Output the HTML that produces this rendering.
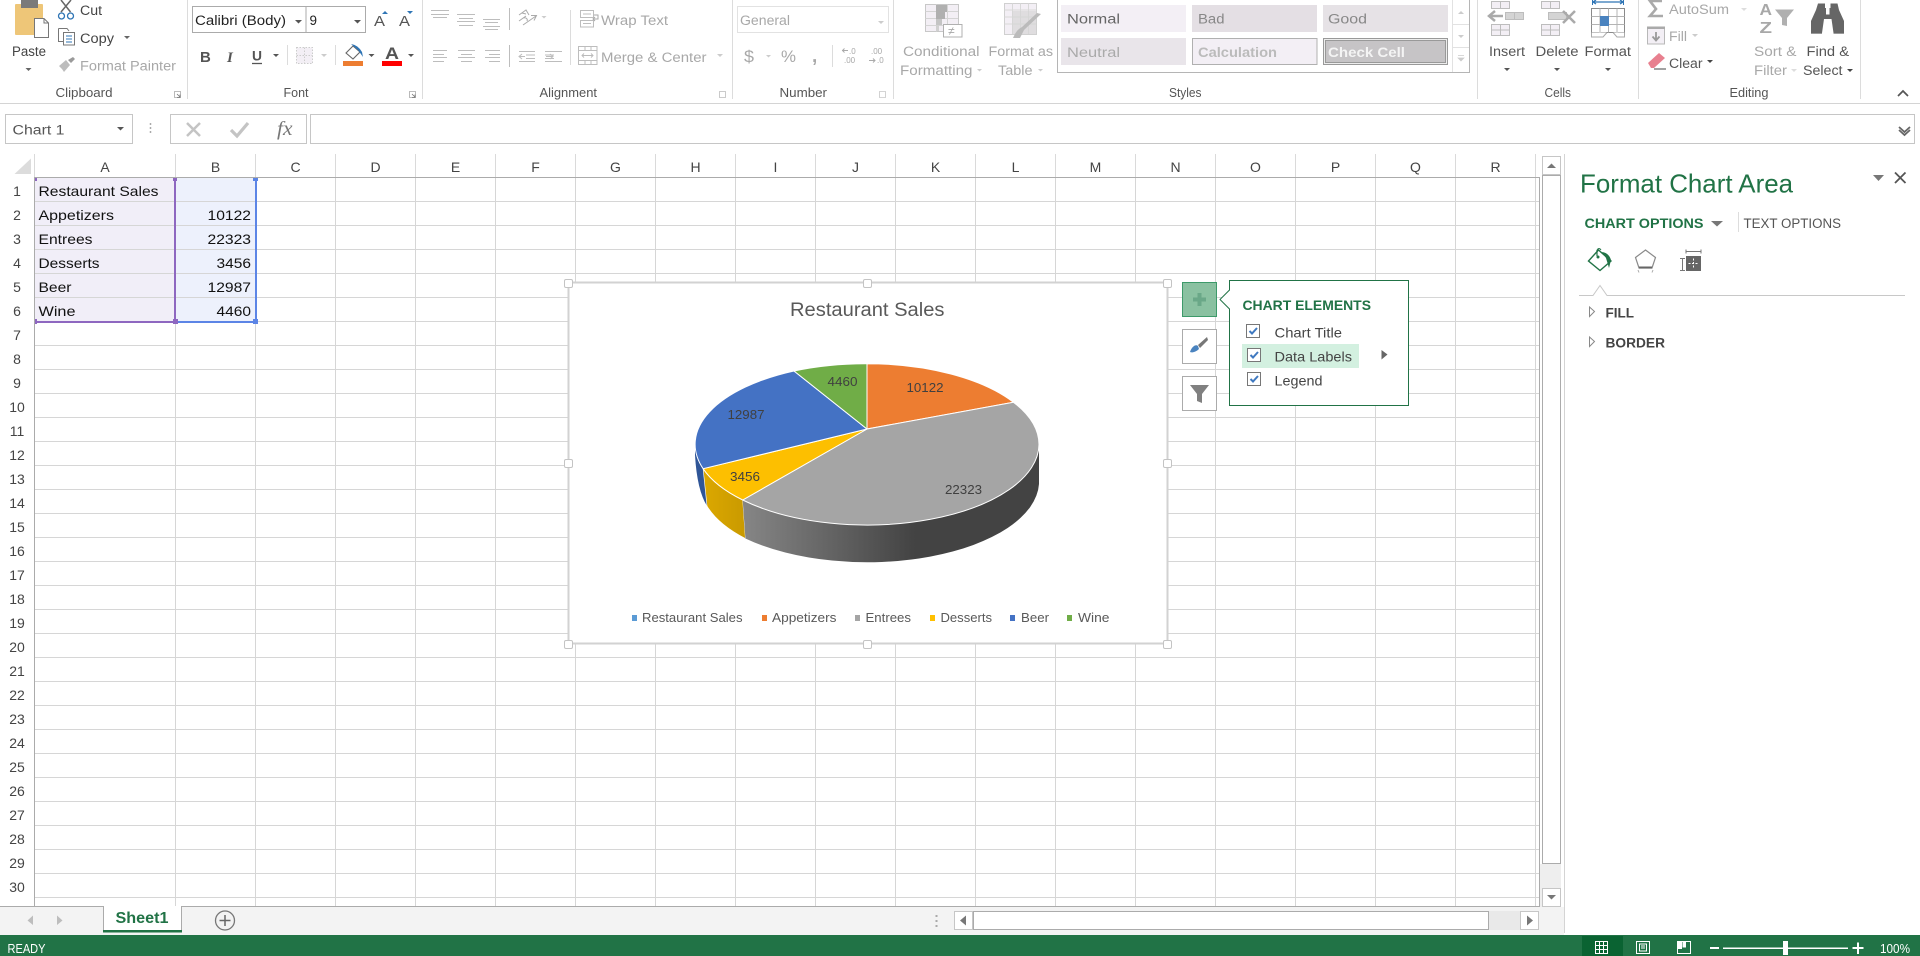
<!DOCTYPE html>
<html lang="en"><head><meta charset="utf-8"><title>Excel chart</title>
<style>
html,body{margin:0;padding:0;background:#fff;width:1920px;height:956px;overflow:hidden}
svg{display:block}
text{font-family:"Liberation Sans",sans-serif;font-size:13.4px;fill:#444}
.g{fill:#a8a8a8}
.k{fill:#222}
.d{fill:#555}
.l{font-size:12.6px;fill:#555}
.c{fill:#111;font-size:14px}
.h{text-anchor:middle;font-size:14px;fill:#444}
.r{text-anchor:middle;font-size:14px;fill:#444}
.dl{font-size:13px;fill:#404040}
.lg{font-size:12.6px;fill:#595959}
.pop{font-size:13.6px;fill:#444}
.b{font-weight:bold}
</style></head><body>
<svg xmlns="http://www.w3.org/2000/svg" width="1920" height="956" viewBox="0 0 1920 956">
<defs>
<linearGradient id="gs" gradientUnits="userSpaceOnUse" x1="745" y1="0" x2="915" y2="0"><stop offset="0" stop-color="#858585"/><stop offset="1" stop-color="#434343"/></linearGradient>
<linearGradient id="ys" gradientUnits="userSpaceOnUse" x1="703" y1="0" x2="745" y2="0"><stop offset="0" stop-color="#dca800"/><stop offset="1" stop-color="#c99a00"/></linearGradient>
<clipPath id="gc"><rect x="0" y="178" width="34" height="728"/></clipPath>
</defs>
<rect width="1920" height="956" fill="#fff"/>

<!-- RIBBON -->
<g>
<!-- clipboard -->
<rect x="15" y="4" width="28" height="31" rx="1" fill="#eec678"/>
<rect x="21" y="0" width="17" height="8" fill="#7a7a7a"/>
<path d="M34.500 18.500H44L48.500 23V37.500H34.500Z" fill="#fff" stroke="#777"/>
<path d="M44 18.500V23H48.500" fill="none" stroke="#777"/>
<text x="12" y="56" textLength="34" lengthAdjust="spacingAndGlyphs">Paste</text>
<path d="M25.500 68h6l-3 3z" fill="#666"/>
<!-- scissors -->
<path d="M61 0L70.500 12M71 0L61 12" stroke="#666" stroke-width="1.500" fill="none"/>
<circle cx="61.500" cy="16" r="3" fill="none" stroke="#2f75b5" stroke-width="1.300"/><circle cx="70.500" cy="16" r="3" fill="none" stroke="#2f75b5" stroke-width="1.300"/>
<text x="80" y="15" textLength="22" lengthAdjust="spacingAndGlyphs">Cut</text>
<!-- copy -->
<path d="M58.500 28.500H67L69 31M58.500 28.500V41.500H63" fill="none" stroke="#777"/>
<rect x="63.500" y="32.500" width="11" height="12.500" fill="#fff" stroke="#777"/>
<path d="M66 36h6M66 39h6M66 42h6" stroke="#2f75b5"/>
<text x="80" y="43" textLength="34" lengthAdjust="spacingAndGlyphs">Copy</text>
<path d="M124 36h6l-3 3z" fill="#666"/>
<!-- painter -->
<path d="M59 66L66 60L70 65L64 72L62 69Z" fill="#bdbdbd"/><path d="M68 60L73 57L75 59L71 63Z" fill="#9a9a9a"/>
<text class="g" x="80" y="70.500" textLength="96" lengthAdjust="spacingAndGlyphs">Format Painter</text>
<text class="l" x="55.500" y="97" textLength="57" lengthAdjust="spacingAndGlyphs">Clipboard</text>
<path d="M174.500 91.500h6v6h-6z" fill="none" stroke="#a8a8a8" stroke-width=".8"/><path d="M177 94l3 3M180 94.500v3h-3" stroke="#777" fill="none" stroke-width=".8"/>
<path d="M187.500 0V99" stroke="#dcdcdc"/>

<!-- font -->
<rect x="192.500" y="6.500" width="113.500" height="26" fill="#fff" stroke="#ababab"/>
<rect x="306" y="6.500" width="59.500" height="26" fill="#fff" stroke="#ababab"/>
<text class="k" x="195" y="25" textLength="91" lengthAdjust="spacingAndGlyphs">Calibri (Body)</text>
<text class="k" x="309.500" y="25" textLength="7.500" lengthAdjust="spacingAndGlyphs">9</text>
<path d="M295 20h7l-3.500 3.500zM354 20h7l-3.500 3.500z" fill="#555"/>
<text class="d" x="374" y="26" style="font-size:15px" textLength="11" lengthAdjust="spacingAndGlyphs">A</text>
<path d="M382 14l3-3 3 3z" fill="#2f75b5"/>
<text class="d" x="399" y="26" style="font-size:15px" textLength="11" lengthAdjust="spacingAndGlyphs">A</text>
<path d="M407 11h6l-3 3z" fill="#2f75b5"/>
<text class="d b" x="200" y="62" style="font-size:15px">B</text>
<text class="d b" x="227" y="62" style="font-size:15px;font-style:italic;font-family:'Liberation Serif',serif">I</text>
<text class="d b" x="252" y="60.500" style="font-size:14px" textLength="10" lengthAdjust="spacingAndGlyphs">U</text>
<path d="M252 63.500H262" stroke="#555" stroke-width="1.300"/>
<path d="M273 54h6l-3 3z" fill="#555"/>
<path d="M287.500 45V65" stroke="#dcdcdc"/>
<rect x="296.500" y="47.500" width="16" height="16" fill="#f3eff5" stroke="#ccc" stroke-dasharray="1.500 1.500"/><path d="M304.500 47.500v16M296.500 55.500h16" stroke="#ccc" stroke-dasharray="1.500 1.500"/>
<path d="M321 54h6l-3 3z" fill="#ccc"/>
<path d="M335.500 45V65" stroke="#dcdcdc"/>
<!-- fill color -->
<path d="M346 53L353 46L360 52L353 59Z" fill="#fff" stroke="#666" stroke-width="1.100"/>
<path d="M351 44Q358 45 362 52L363 57L358 50Z" fill="#2f75b5"/>
<rect x="343" y="61" width="20" height="5" fill="#ed7d31"/>
<path d="M368.500 54h6l-3 3z" fill="#555"/>
<text class="d b" x="385" y="59" style="font-size:16.500px" textLength="14" lengthAdjust="spacingAndGlyphs">A</text>
<rect x="382" y="61" width="20" height="5" fill="#f00"/>
<path d="M408 54h6l-3 3z" fill="#555"/>
<text class="l" x="283.500" y="97" textLength="25" lengthAdjust="spacingAndGlyphs">Font</text>
<path d="M409.500 91.500h6v6h-6z" fill="none" stroke="#a8a8a8" stroke-width=".8"/><path d="M412 94l3 3M415 94.500v3h-3" stroke="#777" fill="none" stroke-width=".8"/>
<path d="M422.500 0V99" stroke="#dcdcdc"/>

<!-- alignment -->
<g stroke="#bdbdbd" fill="none">
<path d="M431 10.500H449M431 14.500H449M433 17.500H447"/>
<path d="M457 14.500H475M459 18.500H473M457 21.500H475M459 25.500H473"/>
<path d="M483 19.500H500M485 22.500H498M483 26.500H500M485 29.500H498"/>
<path d="M433 50.500H447M433 54.500H444M433 57.500H447M433 61.500H444"/>
<path d="M458 50.500H475M461 54.500H472M458 57.500H475M461 61.500H472"/>
<path d="M485 50.500H500M489 54.500H500M485 57.500H500M489 61.500H500"/>
<path d="M509.500 8V30M509.500 45V67"/>
<path d="M519 51.500H535M526 55H535M526 58.500H535M519 61.500H535M525 56.500H519M522 54L519 56.500L522 59"/>
<path d="M545 51.500H562M545 55H554M545 58.500H554M545 61.500H562M546 56.500H553M550 54L553 56.500L550 59"/>
<path d="M570.500 10V65" stroke="#dcdcdc"/>
<path d="M523 25L536 16M531 15.500L536.500 15.500L534 20.500" stroke="#aaa"/>
<path d="M519 15l7-5 3 5M522 13l4 1M519 21l7-5M523 18c3-1 5 1 4 3" stroke="#aaa"/>
<rect x="580.500" y="10.500" width="13" height="7"/><rect x="580.500" y="20.500" width="13" height="6.500"/><path d="M583 14h8M583 23.500h8"/>
<path d="M594 15h4v4h-5M595 17l-2 2 2 2" stroke="#aaa"/>
<rect x="578.500" y="46.500" width="18.500" height="18"/><path d="M578.500 50.500H597M578.500 60.500H597M585 46.500V50.500M591 46.500V50.500M585 60.500V64.500M591 60.500V64.500"/>
<path d="M582 55.500H593M584 53.500L582 55.500L584 57.500M591 53.500L593 55.500L591 57.500" stroke="#bbb"/>
</g>
<path d="M541.500 16h5l-2.500 2.500z" fill="#ccc"/>
<text class="g" x="601" y="25" textLength="67" lengthAdjust="spacingAndGlyphs">Wrap Text</text>
<text class="g" x="601" y="62" textLength="105.500" lengthAdjust="spacingAndGlyphs">Merge &amp; Center</text>
<path d="M717 54h6l-3 3z" fill="#ccc"/>
<text class="l" x="539.500" y="97" textLength="57.500" lengthAdjust="spacingAndGlyphs">Alignment</text>
<path d="M719.500 91.500h6v6h-6z" fill="none" stroke="#c8c8c8" stroke-width=".8"/>
<path d="M732.500 0V99" stroke="#dcdcdc"/>

<!-- number -->
<rect x="737.500" y="6.500" width="151" height="26" fill="#fff" stroke="#e2e2e2"/>
<text class="g" x="740" y="25" textLength="50" lengthAdjust="spacingAndGlyphs">General</text>
<path d="M878 21h6l-3 3z" fill="#ccc"/>
<text class="g" x="744" y="62" style="font-size:17px" textLength="10" lengthAdjust="spacingAndGlyphs">$</text>
<path d="M766 55h5l-2.500 2.500z" fill="#ccc"/>
<text class="g" x="781" y="62" style="font-size:17px" textLength="15" lengthAdjust="spacingAndGlyphs">%</text>
<text class="g b" x="812" y="62" style="font-size:19px">,</text>
<path d="M832.500 45V67" stroke="#dcdcdc"/>
<text class="g" x="849" y="54" style="font-size:8px">.0</text><text class="g" x="844" y="63" style="font-size:8px">.00</text>
<path d="M842 50.500h6M844.500 48.500l-2 2 2 2" stroke="#aaa" fill="none"/>
<text class="g" x="871" y="54" style="font-size:8px">.00</text><text class="g" x="877" y="63" style="font-size:8px">.0</text>
<path d="M869 60.500h6M873 58.500l2 2-2 2" stroke="#aaa" fill="none"/>
<text class="l" x="779.500" y="97" textLength="47.500" lengthAdjust="spacingAndGlyphs">Number</text>
<path d="M719.500 91.500h6v6h-6zM879.500 91.500h6v6h-6z" fill="none" stroke="#c8c8c8" stroke-width=".8"/>
<path d="M893.500 0V99" stroke="#dcdcdc"/>

<!-- cond format -->
<g>
<rect x="925.500" y="4.500" width="33" height="27" fill="#f3eff5" stroke="#c8c8c8"/>
<path d="M925.500 11.500H958M925.500 18.500H958M925.500 25.500H958M936.500 4.500V31.500M947.500 4.500V31.500" stroke="#d4d4d4" fill="none"/>
<rect x="936" y="5" width="11" height="7" fill="#b0b0b0"/><rect x="936" y="12" width="9" height="7" fill="#b0b0b0"/><rect x="936" y="19" width="6" height="6" fill="#c4c4c4"/><rect x="936" y="25" width="3" height="6" fill="#d0d0d0"/>
<rect x="943.500" y="24.500" width="18.500" height="12.500" fill="#fff" stroke="#b0b0b0"/>
<text class="g" x="948" y="35" style="font-size:12px">≠</text>
<text class="g" x="903" y="56" textLength="76.500" lengthAdjust="spacingAndGlyphs">Conditional</text>
<text class="g" x="900" y="75" textLength="72.500" lengthAdjust="spacingAndGlyphs">Formatting</text>
<path d="M977 69h5l-2.500 2.500z" fill="#ccc"/>
<rect x="1004.500" y="3.500" width="32" height="31" fill="#f3eff5" stroke="#d0d0d0"/>
<path d="M1004.500 10H1036M1004.500 17H1036M1004.500 24H1036M1012.500 3.500V34M1020.500 3.500V34M1028.500 3.500V34" stroke="#d8d8d8" fill="none"/>
<rect x="1012" y="11" width="24" height="23" fill="#d6d6d6" opacity=".7"/>
<path d="M1041 14L1024 30L1020 38H1013Q1016 30 1022 27L1037 13Z" fill="#bbb"/>
<text class="g" x="988.500" y="56" textLength="64.500" lengthAdjust="spacingAndGlyphs">Format as</text>
<text class="g" x="998" y="75" textLength="34.500" lengthAdjust="spacingAndGlyphs">Table</text>
<path d="M1038 69h5l-2.500 2.500z" fill="#ccc"/>
</g>

<!-- styles gallery -->
<path d="M1057.500 0V72.500H1469.500V0" fill="#fff" stroke="#b5b5b5"/>
<path d="M1452.500 0V72M1452.500 24.500H1469M1452.500 47.500H1469" stroke="#e2e2e2" fill="none"/>
<rect x="1061" y="5" width="125" height="27" fill="#f3eff5"/>
<rect x="1192" y="5" width="125" height="27" fill="#e4dfe4"/>
<rect x="1323" y="5" width="125" height="27" fill="#e6e2e6"/>
<rect x="1061" y="38" width="125" height="27" fill="#e9e5ea"/>
<rect x="1192.500" y="38.500" width="124.500" height="26" fill="#f3eff5" stroke="#b0b0b0"/>
<rect x="1323" y="38" width="125" height="27" fill="#999"/>
<rect x="1324" y="39" width="123" height="25" fill="#ededed"/>
<rect x="1325" y="40" width="121" height="23" fill="#999"/>
<rect x="1326" y="41" width="119" height="21" fill="#c6c4c6"/>
<text x="1067" y="23.500" style="fill:#666" textLength="53" lengthAdjust="spacingAndGlyphs">Normal</text>
<text x="1198" y="23.500" style="fill:#888" textLength="26.500" lengthAdjust="spacingAndGlyphs">Bad</text>
<text x="1328" y="23.500" style="fill:#888" textLength="39" lengthAdjust="spacingAndGlyphs">Good</text>
<text x="1067" y="57" style="fill:#aaa" textLength="53" lengthAdjust="spacingAndGlyphs">Neutral</text>
<text class="b" x="1198" y="57" style="fill:#bbb" textLength="79" lengthAdjust="spacingAndGlyphs">Calculation</text>
<text class="b" x="1328" y="57" style="fill:#f4f4f4" textLength="77" lengthAdjust="spacingAndGlyphs">Check Cell</text>
<path d="M1458 14l3-3 3 3z" fill="#ccc"/><path d="M1458 35h6l-3 3z" fill="#ccc"/><path d="M1458 58h6l-3 3zM1458 55.500h6" fill="#ccc" stroke="#ccc" stroke-width=".7"/>
<text class="l" x="1169" y="97" textLength="32.500" lengthAdjust="spacingAndGlyphs">Styles</text>
<path d="M1477.500 0V99" stroke="#dcdcdc"/>

<!-- cells -->
<g stroke="#bdbdbd" fill="#f3eff5">
<rect x="1491.500" y="1.500" width="18" height="7"/><path d="M1500.500 1.500v7"/>
<rect x="1505.500" y="12.500" width="18" height="7" fill="#d4d4d4"/><path d="M1514.500 12.500v7"/>
<rect x="1491.500" y="24.500" width="18" height="11"/><path d="M1500.500 24.500v11M1491.500 30h18"/>
<rect x="1541.500" y="1.500" width="18" height="7"/><path d="M1550.500 1.500v7"/>
<rect x="1548.500" y="12.500" width="18" height="7" fill="#d4d4d4"/>
<rect x="1541.500" y="24.500" width="18" height="11"/><path d="M1550.500 24.500v11M1541.500 30h18"/>
</g>
<path d="M1489 16H1503" stroke="#aaa" stroke-width="2.500"/><path d="M1495 11L1489 16L1495 21" fill="none" stroke="#aaa" stroke-width="2.500"/>
<path d="M1563 11L1575 23M1575 11L1563 23" stroke="#aaa" stroke-width="2.500"/>
<text class="d" x="1489" y="56" textLength="36" lengthAdjust="spacingAndGlyphs">Insert</text>
<text class="d" x="1535.500" y="56" textLength="43" lengthAdjust="spacingAndGlyphs">Delete</text>
<text class="d" x="1584.500" y="56" textLength="46.500" lengthAdjust="spacingAndGlyphs">Format</text>
<path d="M1504 68h6l-3 3zM1554 68h6l-3 3zM1605 68h6l-3 3z" fill="#555"/>
<rect x="1591.500" y="8.500" width="33" height="24" fill="#fff" stroke="#8a8a8a"/>
<path d="M1591.500 16.500H1624.500M1591.500 24.500H1624.500M1600 8.500V32.500M1608.500 8.500V32.500M1617 8.500V32.500" stroke="#b4b4b4" fill="none"/>
<path d="M1591.500 32.500V37H1603L1607 32.500M1613 32.500L1617 37H1624.500V32.500" fill="#fff" stroke="#aaa"/>
<rect x="1600" y="16" width="9" height="10" fill="#4a83bf"/>
<path d="M1592 2H1624M1596 0L1593 2L1596 4M1620 0L1623 2L1620 4" fill="none" stroke="#2f75b5" stroke-width="1.300"/>
<path d="M1592.500 0V5M1623.500 0V5" stroke="#2f75b5"/>
<text class="l" x="1544.500" y="97" textLength="26.500" lengthAdjust="spacingAndGlyphs">Cells</text>
<path d="M1638.500 0V99" stroke="#dcdcdc"/>

<!-- editing -->
<path d="M1662 1H1650L1656 9L1650 16H1663" fill="none" stroke="#aaa" stroke-width="2.600"/>
<text class="g" x="1669" y="14" textLength="60" lengthAdjust="spacingAndGlyphs">AutoSum</text>
<path d="M1741 8h6l-3 3z" fill="#ddd"/>
<rect x="1647.500" y="27.500" width="17" height="16.500" fill="#f3eff5" stroke="#b8b8b8"/><rect x="1647" y="26.500" width="18" height="2.500" fill="#aaa"/>
<path d="M1656 32V40M1652.500 36.500L1656 40.500L1659.500 36.500" fill="none" stroke="#999" stroke-width="1.800"/>
<text class="g" x="1669" y="41" textLength="18" lengthAdjust="spacingAndGlyphs">Fill</text>
<path d="M1692 34h6l-3 3z" fill="#ccc"/>
<path d="M1648 63L1659 53L1665 58L1654 68H1651Z" fill="#e8808f"/><path d="M1654 69H1666" stroke="#444"/>
<text class="d" x="1669" y="68" textLength="33.500" lengthAdjust="spacingAndGlyphs">Clear</text>
<path d="M1707 60h6l-3 3z" fill="#444"/>
<text class="g b" x="1759.500" y="15" style="font-size:15.500px" textLength="12.500" lengthAdjust="spacingAndGlyphs">A</text>
<text class="g b" x="1759.500" y="33" style="font-size:15.500px" textLength="12.500" lengthAdjust="spacingAndGlyphs">Z</text>
<path d="M1775 9.500H1794L1787 18V26L1782 25V18Z" fill="#b0b0b0"/>
<text class="g" x="1754" y="56" textLength="42.500" lengthAdjust="spacingAndGlyphs">Sort &amp;</text>
<text class="g" x="1754" y="75" textLength="33" lengthAdjust="spacingAndGlyphs">Filter</text>
<path d="M1791 69h6l-3 3z" fill="#ddd"/>
<path d="M1818 3.500H1825V8H1826V14.500H1829.500V8H1830.500V3.500H1837.500L1839 10L1844 21V33H1833.500L1831.500 19H1824L1822 33H1811V21L1816 10Z" fill="#666"/>
<path d="M1811 33.500H1822M1833.500 33.500H1844" stroke="#999"/>
<text class="d" x="1806.500" y="56" textLength="42.500" lengthAdjust="spacingAndGlyphs">Find &amp;</text>
<text class="d" x="1803" y="75" textLength="39.500" lengthAdjust="spacingAndGlyphs">Select</text>
<path d="M1847 69h6l-3 3z" fill="#444"/>
<text class="l" x="1729.500" y="97" textLength="39" lengthAdjust="spacingAndGlyphs">Editing</text>
<path d="M1860.500 0V99" stroke="#dcdcdc"/>
<path d="M1898 96L1903 91L1908 96" fill="none" stroke="#555" stroke-width="1.700"/>
<path d="M0 103.500H1920" stroke="#d4d4d4"/>
</g>

<!-- FORMULA BAR -->
<rect x="5.500" y="114.500" width="127" height="29" fill="#fff" stroke="#c6c6c6"/>
<text class="d" x="12.500" y="134.500" textLength="52" lengthAdjust="spacingAndGlyphs">Chart 1</text>
<path d="M117 127h7l-3.500 3.500z" fill="#555"/>
<path d="M150.500 123v2M150.500 127v2M150.500 131v2" stroke="#aaa" stroke-width="1.500"/>
<rect x="170.500" y="114.500" width="136" height="29" fill="#fff" stroke="#c6c6c6"/>
<rect x="310.500" y="114.500" width="1604" height="29" fill="#fff" stroke="#c6c6c6"/>
<path d="M187 123L200 136M200 123L187 136" stroke="#c4c4c4" stroke-width="2.500"/>
<path d="M231 130L237 136L248 123" fill="none" stroke="#c4c4c4" stroke-width="3.200"/>
<text x="277" y="135" style="font-family:'Liberation Serif',serif;font-style:italic;font-size:20px;fill:#777" textLength="15.500" lengthAdjust="spacingAndGlyphs">fx</text>
<path d="M1899 127L1904.500 132L1910 127M1899 130L1904.500 135L1910 130" fill="none" stroke="#666" stroke-width="1.800"/>

<!-- HEADERS -->
<path d="M14.500 174H31V158.500Z" fill="#dcdcdc"/>
<path d="M34.500 154V177M175.500 154V177M255.500 154V177M335.500 154V177M415.500 154V177M495.500 154V177M575.500 154V177M655.500 154V177M735.500 154V177M815.500 154V177M895.500 154V177M975.500 154V177M1055.500 154V177M1135.500 154V177M1215.500 154V177M1295.500 154V177M1375.500 154V177M1455.500 154V177M1535.500 154V177" stroke="#dadada"/>
<text class="h" x="105" y="172">A</text><text class="h" x="215.500" y="172">B</text><text class="h" x="295.500" y="172">C</text><text class="h" x="375.500" y="172">D</text><text class="h" x="455.500" y="172">E</text><text class="h" x="535.500" y="172">F</text><text class="h" x="615.500" y="172">G</text><text class="h" x="695.500" y="172">H</text><text class="h" x="775.500" y="172">I</text><text class="h" x="855.500" y="172">J</text><text class="h" x="935.500" y="172">K</text><text class="h" x="1015.500" y="172">L</text><text class="h" x="1095.500" y="172">M</text><text class="h" x="1175.500" y="172">N</text><text class="h" x="1255.500" y="172">O</text><text class="h" x="1335.500" y="172">P</text><text class="h" x="1415.500" y="172">Q</text><text class="h" x="1495.500" y="172">R</text>

<!-- SELECTION FILL -->
<rect x="35" y="178" width="140" height="143" fill="#f1eef8"/>
<rect x="176" y="178" width="79" height="143" fill="#edf1fc"/>

<!-- GRID -->
<path d="M35 201.500H1539M35 225.500H1539M35 249.500H1539M35 273.500H1539M35 297.500H1539M35 321.500H1539M35 345.500H1539M35 369.500H1539M35 393.500H1539M35 417.500H1539M35 441.500H1539M35 465.500H1539M35 489.500H1539M35 513.500H1539M35 537.500H1539M35 561.500H1539M35 585.500H1539M35 609.500H1539M35 633.500H1539M35 657.500H1539M35 681.500H1539M35 705.500H1539M35 729.500H1539M35 753.500H1539M35 777.500H1539M35 801.500H1539M35 825.500H1539M35 849.500H1539M35 873.500H1539M35 897.500H1539" stroke="#d6d6d6"/>
<path d="M175.500 178V906M255.500 178V906M335.500 178V906M415.500 178V906M495.500 178V906M575.500 178V906M655.500 178V906M735.500 178V906M815.500 178V906M895.500 178V906M975.500 178V906M1055.500 178V906M1135.500 178V906M1215.500 178V906M1295.500 178V906M1375.500 178V906M1455.500 178V906M1535.500 178V906" stroke="#d6d6d6"/>
<path d="M34 177.500H1539.500V906.500M34.500 177V906" fill="none" stroke="#ababab"/>

<!-- ROW NUMBERS -->
<g clip-path="url(#gc)">
<text class="r" x="17" y="196">1</text><text class="r" x="17" y="220">2</text><text class="r" x="17" y="244">3</text><text class="r" x="17" y="268">4</text><text class="r" x="17" y="292">5</text><text class="r" x="17" y="316">6</text><text class="r" x="17" y="340">7</text><text class="r" x="17" y="364">8</text><text class="r" x="17" y="388">9</text><text class="r" x="17" y="412">10</text><text class="r" x="17" y="436">11</text><text class="r" x="17" y="460">12</text><text class="r" x="17" y="484">13</text><text class="r" x="17" y="508">14</text><text class="r" x="17" y="532">15</text><text class="r" x="17" y="556">16</text><text class="r" x="17" y="580">17</text><text class="r" x="17" y="604">18</text><text class="r" x="17" y="628">19</text><text class="r" x="17" y="652">20</text><text class="r" x="17" y="676">21</text><text class="r" x="17" y="700">22</text><text class="r" x="17" y="724">23</text><text class="r" x="17" y="748">24</text><text class="r" x="17" y="772">25</text><text class="r" x="17" y="796">26</text><text class="r" x="17" y="820">27</text><text class="r" x="17" y="844">28</text><text class="r" x="17" y="868">29</text><text class="r" x="17" y="892">30</text><text class="r" x="17" y="916">31</text>
</g>

<!-- CELLS -->
<text class="c" x="38.500" y="196" textLength="120" lengthAdjust="spacingAndGlyphs">Restaurant Sales</text>
<text class="c" x="38.500" y="220" textLength="75.500" lengthAdjust="spacingAndGlyphs">Appetizers</text>
<text class="c" x="38.500" y="244" textLength="54" lengthAdjust="spacingAndGlyphs">Entrees</text>
<text class="c" x="38.500" y="268" textLength="61" lengthAdjust="spacingAndGlyphs">Desserts</text>
<text class="c" x="38.500" y="292" textLength="33" lengthAdjust="spacingAndGlyphs">Beer</text>
<text class="c" x="38.500" y="316" textLength="37" lengthAdjust="spacingAndGlyphs">Wine</text>
<text class="c" x="207.500" y="220" textLength="43.500" lengthAdjust="spacingAndGlyphs">10122</text>
<text class="c" x="207.500" y="244" textLength="43.500" lengthAdjust="spacingAndGlyphs">22323</text>
<text class="c" x="216.500" y="268" textLength="34.500" lengthAdjust="spacingAndGlyphs">3456</text>
<text class="c" x="207.500" y="292" textLength="43.500" lengthAdjust="spacingAndGlyphs">12987</text>
<text class="c" x="216.500" y="316" textLength="34.500" lengthAdjust="spacingAndGlyphs">4460</text>

<!-- SELECTION BORDERS -->
<rect x="174" y="178" width="2" height="144" fill="#8e67c0"/>
<rect x="35" y="321" width="140" height="2" fill="#8e67c0"/>
<rect x="255" y="178" width="2" height="144" fill="#5c85e6"/>
<rect x="176" y="321" width="80" height="2" fill="#5c85e6"/>
<rect x="35" y="178" width="2" height="3" fill="#8e67c0"/><rect x="173" y="178" width="4" height="3" fill="#8e67c0"/><rect x="253" y="178" width="5" height="3" fill="#5c85e6"/>
<rect x="35" y="319" width="2" height="5" fill="#8e67c0"/><rect x="173" y="319" width="5" height="5" fill="#8e67c0"/><rect x="253" y="319" width="5" height="5" fill="#5c85e6"/>

<!-- CHART -->
<rect x="568.500" y="282.500" width="599" height="361" fill="#fff" stroke="#d2d2d2" stroke-width="2"/>
<g fill="#fff" stroke="#c4c4c4"><rect x="564.500" y="279.500" width="8" height="8" rx="1.500"/><rect x="863.500" y="279.500" width="8" height="8" rx="1.500"/><rect x="1163.500" y="279.500" width="8" height="8" rx="1.500"/><rect x="564.500" y="459.500" width="8" height="8" rx="1.500"/><rect x="1163.500" y="459.500" width="8" height="8" rx="1.500"/><rect x="564.500" y="640.500" width="8" height="8" rx="1.500"/><rect x="863.500" y="640.500" width="8" height="8" rx="1.500"/><rect x="1163.500" y="640.500" width="8" height="8" rx="1.500"/></g>
<text x="790" y="316" style="font-size:19px;fill:#595959" textLength="154.500" lengthAdjust="spacingAndGlyphs">Restaurant Sales</text>

<!-- pie sides -->
<path d="M695 446L703.100 468.700L707 506Q697 490 695 455Z" fill="#2f5597"/>
<path d="M703.100 468.700A172 81 0 0 0 742.700 500L745.400 538.500A172 81 0 0 1 707 506Z" fill="url(#ys)" stroke="#fff" stroke-width=".6"/>
<path d="M742.700 500A172 81 0 0 0 1039 444.500V484A172 81 0 0 1 745.400 538.500Z" fill="url(#gs)"/>
<!-- pie top -->
<g stroke="#fff" stroke-width="1" stroke-linejoin="round">
<path d="M867 429V363.700A172 81 0 0 1 1013.500 402.300Z" fill="#ed7d31"/>
<path d="M867 429L1013.500 402.300A172 81 0 0 1 1039 444.500A172 81 0 0 1 742.700 500Z" fill="#a5a5a5"/>
<path d="M867 429L742.700 500A172 81 0 0 1 703.100 468.700Z" fill="#fdbf00"/>
<path d="M867 429L703.100 468.700A172 81 0 0 1 794 371Z" fill="#4472c4"/>
<path d="M867 429L794 371A172 81 0 0 1 867 363.700Z" fill="#70ad47"/>
</g>
<text class="dl" x="906.500" y="392" textLength="37" lengthAdjust="spacingAndGlyphs">10122</text>
<text class="dl" x="827.500" y="386" textLength="30" lengthAdjust="spacingAndGlyphs">4460</text>
<text class="dl" x="727.500" y="419" textLength="37" lengthAdjust="spacingAndGlyphs">12987</text>
<text class="dl" x="730" y="481" textLength="30" lengthAdjust="spacingAndGlyphs">3456</text>
<text class="dl" x="945" y="494" textLength="37" lengthAdjust="spacingAndGlyphs">22323</text>

<!-- legend -->
<rect x="632" y="615" width="5" height="6" fill="#5b9bd5"/><text class="lg" x="642" y="622" textLength="100.500" lengthAdjust="spacingAndGlyphs">Restaurant Sales</text>
<rect x="762" y="615" width="5" height="6" fill="#ed7d31"/><text class="lg" x="772" y="622" textLength="64.500" lengthAdjust="spacingAndGlyphs">Appetizers</text>
<rect x="855" y="615" width="5" height="6" fill="#a5a5a5"/><text class="lg" x="865.500" y="622" textLength="45.500" lengthAdjust="spacingAndGlyphs">Entrees</text>
<rect x="930" y="615" width="5" height="6" fill="#ffc000"/><text class="lg" x="940.500" y="622" textLength="51.500" lengthAdjust="spacingAndGlyphs">Desserts</text>
<rect x="1010" y="615" width="5" height="6" fill="#4472c4"/><text class="lg" x="1021" y="622" textLength="28" lengthAdjust="spacingAndGlyphs">Beer</text>
<rect x="1067" y="615" width="5" height="6" fill="#70ad47"/><text class="lg" x="1078" y="622" textLength="31.500" lengthAdjust="spacingAndGlyphs">Wine</text>

<!-- chart buttons -->
<rect x="1182.500" y="282.500" width="34" height="34" fill="#8ac1a1" stroke="#3d9a6a"/>
<path d="M1199.500 293V306M1193 299.500H1206" stroke="#6aa888" stroke-width="4"/>
<rect x="1182.500" y="329.500" width="34" height="34" fill="#fff" stroke="#ababab"/>
<path d="M1190 352C1192 346 1196 344 1198 346L1199 349C1196 352 1192 353 1190 352Z" fill="#4a83bf"/>
<path d="M1198 345L1207 337L1208 340L1200 348Z" fill="#777"/>
<rect x="1182.500" y="376.500" width="34" height="34" fill="#fff" stroke="#ababab"/>
<path d="M1190 385H1209L1202 394V403L1197 401V394Z" fill="#808080"/>

<!-- popup -->
<path d="M1229.500 280.500H1408.500V405.500H1229.500V309L1220 299.500L1229.500 290Z" fill="#fff" stroke="#217346"/>
<text class="b" x="1242.500" y="310" style="font-size:14px;fill:#217346" textLength="128.500" lengthAdjust="spacingAndGlyphs">CHART ELEMENTS</text>
<rect x="1242" y="344" width="117" height="24" fill="#d3f0e0"/>
<g fill="#fff" stroke="#777"><rect x="1246.500" y="324.500" width="13" height="13"/><rect x="1247.500" y="348.500" width="13" height="13"/><rect x="1247.500" y="372.500" width="13" height="13"/></g>
<g fill="none" stroke="#3f79c0" stroke-width="2"><path d="M1249.500 331L1252 333.500L1257 328"/><path d="M1250.500 355L1253 357.500L1258 352"/><path d="M1250.500 379L1253 381.500L1258 376"/></g>
<text class="pop" x="1274.500" y="337.500" textLength="67.500" lengthAdjust="spacingAndGlyphs">Chart Title</text>
<text class="pop" x="1274.500" y="361.500" textLength="77.500" lengthAdjust="spacingAndGlyphs">Data Labels</text>
<text class="pop" x="1274.500" y="385.500" textLength="48" lengthAdjust="spacingAndGlyphs">Legend</text>
<path d="M1381.500 350L1387.500 354.500L1381.500 359.500Z" fill="#666"/>

<!-- V SCROLLBAR -->
<rect x="1540" y="154" width="24" height="752" fill="#fff"/>
<rect x="1540" y="864" width="21" height="44" fill="#eee"/>
<rect x="1542.500" y="156.500" width="18" height="18" fill="#fff" stroke="#c6c6c6"/>
<path d="M1547 168L1551.500 163.500L1556 168Z" fill="#777"/>
<rect x="1542.500" y="175.500" width="18" height="688" fill="#fff" stroke="#ababab"/>
<rect x="1542.500" y="888.500" width="18" height="18" fill="#fff" stroke="#c6c6c6"/>
<path d="M1547 895H1556L1551.500 899.500Z" fill="#777"/>
<path d="M1564.500 154V933" stroke="#d4d4d4"/>

<!-- TAB BAR -->
<rect x="0" y="907" width="1564" height="28" fill="#f3f3f3"/>
<path d="M0 906.500H1540" stroke="#ababab"/>
<path d="M33 915.500V925L27.500 920.500ZM57 915.500V925L62.500 920.500Z" fill="#bdbdbd"/>
<rect x="103.500" y="906" width="78" height="25" fill="#fff"/>
<path d="M103.500 906V931M181.500 906V931" stroke="#ababab"/>
<rect x="103" y="930" width="79" height="2.500" fill="#217346"/>
<text class="b" x="115.500" y="923" style="font-size:15.500px;fill:#217346" textLength="53" lengthAdjust="spacingAndGlyphs">Sheet1</text>
<circle cx="225" cy="920.500" r="9.500" fill="none" stroke="#777" stroke-width="1.300"/>
<path d="M225 915V926M219.500 920.500H230.500" stroke="#666" stroke-width="1.500"/>
<path d="M936.500 915v2M936.500 920v2M936.500 925v2" stroke="#aaa" stroke-width="2"/>
<rect x="954.500" y="911.500" width="18" height="18" fill="#fff" stroke="#c6c6c6"/>
<path d="M966 915.500V925.500L960 920.500Z" fill="#777"/>
<rect x="1489" y="911" width="31" height="19" fill="#e9e9e9"/>
<rect x="973.500" y="911.500" width="515" height="18" fill="#fff" stroke="#ababab"/>
<rect x="1520.500" y="911.500" width="18" height="18" fill="#fff" stroke="#c6c6c6"/>
<path d="M1527 915.500V925.500L1533 920.500Z" fill="#777"/>

<!-- STATUS BAR -->
<rect x="0" y="935" width="1920" height="21" fill="#217346"/>
<text x="7.500" y="953" style="font-size:12.500px;fill:#fff" textLength="38" lengthAdjust="spacingAndGlyphs">READY</text>
<rect x="1582" y="936" width="41" height="20" fill="#0a6332"/>
<g fill="none" stroke="#fff">
<rect x="1595.500" y="941.500" width="12" height="12"/><path d="M1599.500 941.500v12M1603.500 941.500v12M1595.500 945.500h12M1595.500 949.500h12"/>
<rect x="1636.500" y="941.500" width="13" height="12"/><rect x="1639.500" y="944" width="7" height="7"/><path d="M1641 946h4M1641 948h4"/>
<rect x="1677.500" y="941.500" width="13" height="12"/>
</g>
<rect x="1678" y="942" width="4" height="7" fill="#fff"/><rect x="1682.500" y="942" width="3.500" height="5.500" fill="#fff"/>
<rect x="1710" y="947" width="9" height="2" fill="#fff"/>
<rect x="1723" y="947.500" width="125" height="1.500" fill="#fff"/>
<rect x="1783" y="941" width="5" height="14" fill="#fff"/>
<path d="M1858 942.500V954M1852.500 948H1863.500" stroke="#fff" stroke-width="2"/>
<text x="1880" y="953" style="font-size:13px;fill:#fff" textLength="30" lengthAdjust="spacingAndGlyphs">100%</text>

<!-- TASK PANE -->
<text x="1580" y="192.500" style="font-size:26px;fill:#217346" textLength="213" lengthAdjust="spacingAndGlyphs">Format Chart Area</text>
<path d="M1873 175H1884L1878.500 181Z" fill="#777"/>
<path d="M1895 172.500L1905.500 183M1905.500 172.500L1895 183" stroke="#555" stroke-width="1.800"/>
<text class="b" x="1584.500" y="228" style="fill:#217346;font-size:13.500px" textLength="119" lengthAdjust="spacingAndGlyphs">CHART OPTIONS</text>
<path d="M1711 221H1723L1717 226.500Z" fill="#777"/>
<path d="M1738.500 212V232" stroke="#ddd"/>
<text x="1743.500" y="228" style="font-size:13.500px;fill:#555" textLength="97.500" lengthAdjust="spacingAndGlyphs">TEXT OPTIONS</text>
<!-- fill icon -->
<path d="M1588.500 261L1598.500 250L1611 261L1600 270.500Z" fill="#fff" stroke="#217346" stroke-width="1.400"/>
<path d="M1597 250V256" stroke="#217346" stroke-width="1.200"/><circle cx="1598" cy="257" r="1.500" fill="#217346"/>
<path d="M1597 250Q1599 247 1601 250" fill="none" stroke="#217346"/>
<path d="M1602 252Q1609 253 1611 260L1609 268L1606 258Z" fill="#217346"/>
<!-- pentagon icon -->
<path d="M1645.500 250L1655.500 257.500L1652 268H1639L1635.500 257.500Z" fill="#fff" stroke="#8a8a8a" stroke-width="1.200"/>
<path d="M1639 267.500H1652" stroke="#666" stroke-width="2"/>
<path d="M1638 270L1639 272.500M1653 270L1652 272.500" stroke="#aaa"/>
<!-- size icon -->
<path d="M1686 251.500H1701M1686 249.500v4M1701 249.500v4M1680 258.500H1685M1680 270.500H1685M1682.500 258.500V270.500" stroke="#777" fill="none"/>
<rect x="1686" y="256" width="15" height="15" fill="#666"/>
<path d="M1693.500 258.500V268.500M1688.500 263.500H1698.500" stroke="#fff" stroke-dasharray="2 1.500"/>
<!-- notch -->
<path d="M1579 295.500H1593L1600 285.500L1607 295.500H1905" fill="none" stroke="#c8c8c8"/>
<path d="M1589.500 307L1594.500 311.500L1589.500 316.500ZM1589.500 337L1594.500 341.500L1589.500 346.500Z" fill="#fff" stroke="#888"/>
<text class="b" x="1605.500" y="317.500" style="font-size:13.500px;fill:#444" textLength="28.500" lengthAdjust="spacingAndGlyphs">FILL</text>
<text class="b" x="1605.500" y="347.500" style="font-size:13.500px;fill:#444" textLength="59.500" lengthAdjust="spacingAndGlyphs">BORDER</text>
</svg>
</body></html>
